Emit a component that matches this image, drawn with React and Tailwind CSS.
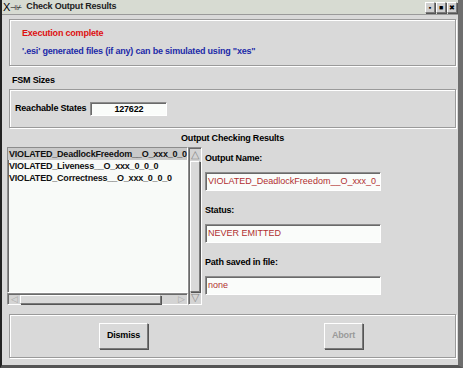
import React from "react";

const groove = "border border-[#9a9a9a] shadow-[1px_1px_0_#ffffff,inset_1px_1px_0_#ffffff]";
const sunken = "border border-[#8c8c8c] border-r-white border-b-white shadow-[inset_1px_1px_0_#6a6a6a]";
const raised = "border border-white border-r-[#7a7a7a] border-b-[#7a7a7a] shadow-[1px_1px_0_#555]";
const label = "text-[9px] font-bold tracking-[-0.2px]";

function Field({ title, value }) {
  return (
    <div className="flex flex-col">
      <div className={`h-[14px] leading-[14px] text-black ${label}`}>{title}</div>
      <div className={`mt-[7px] h-[19px] w-[176px] overflow-hidden whitespace-nowrap bg-[#fafcfa] pl-[2px] text-[9px] leading-[17px] text-[#b03030] ${sunken}`}>
        {value}
      </div>
    </div>
  );
}

export default function App() {
  return (
    <div className="flex h-[368px] w-[463px] flex-col border-l-2 border-r-[5px] border-b-[3px] border-l-[#222] border-r-[#6e6e6e] border-b-[#555] bg-[#d9d9d9] font-['Liberation_Sans',sans-serif]">
      {/* title bar */}
      <div className="flex h-[15px] shrink-0 items-center border-b border-[#9a9a9a] bg-[#d7dbd2]">
        <span className="ml-[1px] text-[11px] leading-none text-black">X</span>
        <span className="text-[7px] leading-none text-black">⊣⊬</span>
        <span className={`ml-[4px] text-[#222] ${label}`}>Check Output Results</span>
        <div className="ml-auto mr-[1px] flex gap-[1px]">
          {["▪", "■", "✖"].map((g, i) => (
            <div key={i} className={`flex h-[11px] w-[10px] items-center justify-center bg-[#d0d0d0] text-[7px] leading-none text-black ${raised}`}>
              {g}
            </div>
          ))}
        </div>
      </div>

      <div className="flex flex-1 flex-col pl-[7px] pr-[2px]">
        {/* status messages */}
        <div className={`mt-[4px] flex h-[47px] flex-col justify-center gap-[7px] pl-[12px] ${groove}`}>
          <div className={`leading-[11px] text-[#dd1010] ${label}`}>Execution complete</div>
          <div className={`leading-[11px] text-[#1c2aa8] ${label}`}>'.esi' generated files (if any) can be simulated using "xes"</div>
        </div>

        <div className={`mt-[7px] h-[14px] pl-[3px] leading-[14px] text-black ${label}`}>FSM Sizes</div>
        <div className={`mt-[2px] flex h-[39px] items-center pl-[5px] ${groove}`}>
          <span className={`text-black ${label}`}>Reachable States</span>
          <div className={`ml-[4px] h-[14px] w-[77px] bg-[#fafcfa] text-center leading-[12px] text-black ${label} ${sunken}`}>127622</div>
        </div>

        <div className={`mt-[3px] h-[14px] text-center leading-[14px] text-black ${label}`}>Output Checking Results</div>

        <div className="-ml-[2px] mt-[2px] flex h-[158px]">
          {/* list with scrollbars */}
          <div className="flex">
            <div className="flex w-[181px] flex-col">
              <div className={`flex-1 overflow-hidden bg-[#f8faf8] ${sunken}`}>
                {[
                  "VIOLATED_DeadlockFreedom__O_xxx_0_0_0",
                  "VIOLATED_Liveness__O_xxx_0_0_0",
                  "VIOLATED_Correctness__O_xxx_0_0_0",
                ].map((t, i) => (
                  <div key={t} className={`h-[12px] overflow-hidden whitespace-nowrap pl-[1px] leading-[12px] text-[#111] ${label} ${i === 0 ? "bg-[#c9c9c9]" : ""}`}>
                    {t}
                  </div>
                ))}
              </div>
              <div className={`flex h-[12px] items-center bg-[#d4d4d4] ${sunken}`}>
                <span className="w-[12px] text-center text-[9px] leading-none text-[#aaa]">◁</span>
                <div className={`h-[9px] w-[141px] bg-[#d9d9d9] ${raised}`} />
                <span className="ml-auto w-[12px] text-center text-[9px] leading-none text-[#aaa]">▷</span>
              </div>
            </div>
            <div className={`flex w-[14px] flex-col items-center bg-[#d4d4d4] ${sunken}`}>
              <span className="mt-[1px] text-[11px] leading-[11px] text-[#888]">△</span>
              <div className={`mt-[1px] w-[10px] flex-1 bg-[#d9d9d9] ${raised}`} />
              <span className="mb-[1px] text-[11px] leading-[11px] text-[#888]">▽</span>
            </div>
          </div>

          {/* details */}
          <div className="ml-[3px] flex flex-col gap-[12px] pt-[4px]">
            <Field title="Output Name:" value="VIOLATED_DeadlockFreedom__O_xxx_0_0_0" />
            <Field title="Status:" value="NEVER EMITTED" />
            <Field title="Path saved in file:" value="none" />
          </div>
        </div>

        {/* buttons */}
        <div className={`mt-[9px] flex h-[44px] items-center ${groove}`}>
          <button className={`ml-[89px] h-[26px] w-[49px] bg-[#d9d9d9] text-black ${label} ${raised}`}>Dismiss</button>
          <button className={`ml-[176px] h-[26px] w-[39px] bg-[#d9d9d9] text-[#9a9a9a] ${label} ${raised}`}>Abort</button>
        </div>
      </div>
    </div>
  );
}
